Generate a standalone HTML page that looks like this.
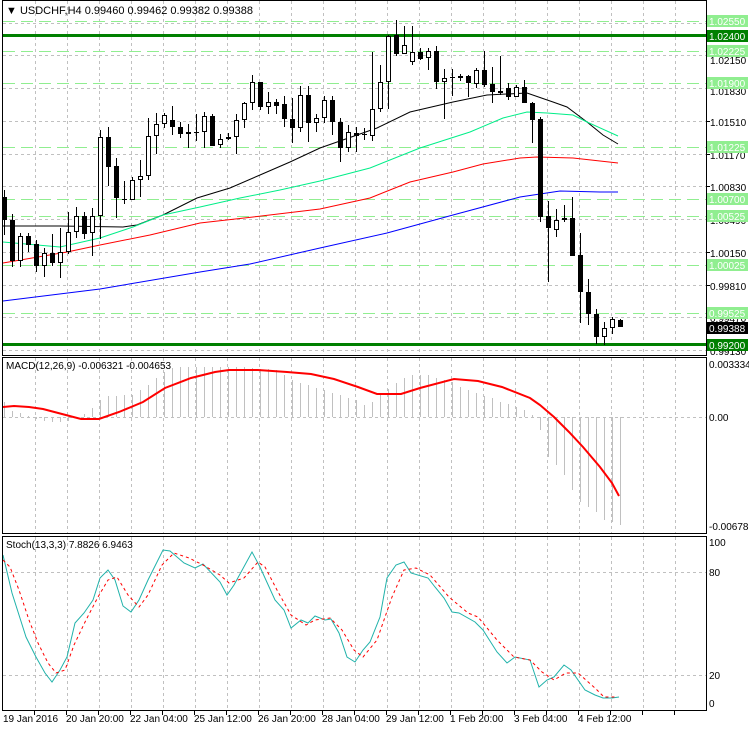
<!DOCTYPE html>
<html><head><meta charset="utf-8"><style>
html,body{margin:0;padding:0;background:#fff;}
body{width:749px;height:731px;overflow:hidden;font-family:"Liberation Sans",sans-serif;}
svg{display:block}
text{font-family:"Liberation Sans",sans-serif;font-size:10px;fill:#000}
</style></head><body>
<svg id="s" width="749" height="731" xmlns="http://www.w3.org/2000/svg" shape-rendering="crispEdges">
<rect width="749" height="731" fill="#fff"/>
<g id="grid" stroke="#c0c0c0" stroke-dasharray="3,3" stroke-width="1"></g>
<g id="lv"></g>
<g id="ma" fill="none" shape-rendering="auto"></g>
<g id="cd"></g>
<g id="hist" stroke="#c0c0c0"></g>
<g id="ind" fill="none" shape-rendering="auto"></g>
<g stroke="#000" fill="none">
<rect x="2.5" y="0.5" width="704" height="355"/>
<rect x="2.5" y="357.5" width="704" height="176"/>
<rect x="2.5" y="536.5" width="704" height="174"/>
</g>
<g id="ticks" stroke="#000"></g>
<text x="6" y="14" style="font-size:11px">&#9660; USDCHF,H4  0.99460 0.99462 0.99382 0.99388</text>
<text x="6" y="369" style="font-size:10px">MACD(12,26,9) -0.006321 -0.004653</text>
<text x="6" y="548" style="font-size:10px">Stoch(13,3,3) 7.8826 6.9463</text>
<g id="ax">
<text x="710" y="64">1.02150</text>
<text x="710" y="95">1.01830</text>
<text x="710" y="126">1.01510</text>
<text x="710" y="159">1.01170</text>
<text x="710" y="191">1.00830</text>
<text x="710" y="224">1.00490</text>
<text x="710" y="257">1.00150</text>
<text x="710" y="290">0.99810</text>
<text x="710" y="322">0.99470</text>
<text x="710" y="355">0.99130</text>
</g>
<g id="bx"></g>
<text x="709" y="368">0.003334</text>
<text x="709" y="421">0.00</text>
<text x="709" y="530">-0.006781</text>
<text x="709" y="546">100</text>
<text x="709" y="576">80</text>
<text x="709" y="679">20</text>
<text x="709" y="707">0</text>
<text x="3" y="722">19 Jan 2016</text>
<text x="66" y="722">20 Jan 20:00</text>
<text x="130" y="722">22 Jan 04:00</text>
<text x="194" y="722">25 Jan 12:00</text>
<text x="258" y="722">26 Jan 20:00</text>
<text x="322" y="722">28 Jan 04:00</text>
<text x="386" y="722">29 Jan 12:00</text>
<text x="450" y="722">1 Feb 20:00</text>
<text x="514" y="722">3 Feb 04:00</text>
<text x="578" y="722">4 Feb 12:00</text>
</svg>
<script>
var NS="http://www.w3.org/2000/svg";
function el(p,t,a){var e=document.createElementNS(NS,t);for(var k in a)e.setAttribute(k,a[k]);document.getElementById(p).appendChild(e);return e;}
for(var k=1;k<=21;k++){var x=3.5+32*k;if(x>705)break;
 el('grid','line',{x1:x,y1:1,x2:x,y2:355});el('grid','line',{x1:x,y1:358,x2:x,y2:533});el('grid','line',{x1:x,y1:537,x2:x,y2:710});
 el('ticks','line',{x1:x-1,y1:711,x2:x-1,y2:715});}
for(var k=0;k<=10;k++){var y=Math.round(22.5+32.75*k)+0.5;el('grid','line',{x1:3,y1:y,x2:706,y2:y});el('ticks','line',{x1:706,y1:y,x2:710,y2:y});}
[417.5].forEach(function(y){el('grid','line',{x1:3,y1:y,x2:706,y2:y});});
[572.5,675.5].forEach(function(y){el('grid','line',{x1:3,y1:y,x2:706,y2:y});});
[21,51,83,147,199,216,265,313].forEach(function(y){el('lv','line',{x1:3,y1:y+0.5,x2:706,y2:y+0.5,stroke:'#90ee90','stroke-dasharray':'12,6'});});
[35,344].forEach(function(y){el('lv','rect',{x:3,y:y-1,width:703,height:3,fill:'#008000'});});
function box(y,t,bg){el('bx','rect',{x:707,y:y-6,width:41,height:12,fill:bg});var e=el('bx','text',{x:709,y:y+4,style:'fill:#fff'});e.textContent=t;}
box(21,'1.02550','#90ee90');box(36,'1.02400','#008000');box(51,'1.02225','#90ee90');box(83,'1.01900','#90ee90');
box(147,'1.01225','#90ee90');box(199,'1.00700','#90ee90');box(216,'1.00525','#90ee90');box(265,'1.00025','#90ee90');
box(313,'0.99525','#90ee90');box(328,'0.99388','#000');box(345,'0.99200','#008000');
function pl(g,pts,col,extra){var a={points:pts.map(function(p){return p.join(',')}).join(' '),stroke:col,'stroke-width':1};for(var k in extra)a[k]=extra[k];el(g,'polyline',a);}
pl('ma',[[3,226],[60,226],[123,227],[137,225],[163,215],[197,198],[230,188],[260,175],[290,162],[320,148],[377,128],[410,112],[453,102],[487,95],[527,93],[553,102],[567,107],[587,122],[603,135],[618,144]],'#000');
pl('ma',[[3,242],[60,247],[100,238],[133,227],[163,215],[200,207],[240,198],[280,190],[320,181],[370,168],[420,148],[470,132],[503,118],[527,112],[547,113],[573,115],[587,122],[618,136]],'#00ee88');
pl('ma',[[3,263],[67,252],[100,245],[150,235],[200,223],[253,217],[320,209],[370,198],[410,182],[453,172],[483,164],[520,158],[537,157],[573,158],[618,163]],'#ff0000');
pl('ma',[[3,301],[100,289],[200,272],[250,264],[320,248],[387,233],[453,215],[520,197],[560,191],[600,192],[618,192]],'#0000ff');
var C=[[0,197,220,190,235],[0,220,261,214,267],[1,236,261,233,267],[0,236,245,233,252],[0,244,266,240,272],[1,253,266,248,277],[0,253,263,234,266],[1,252,263,228,278],[1,232,252,212,254],[1,216,232,207,238],
[0,216,234,212,239],[1,216,233,208,256],[1,137,216,130,239],[0,137,167,127,186],[0,166,198,158,218],[0,199,200,181,204],[1,180,200,177,200],[1,176,180,160,197],[1,136,176,118,180],[1,124,136,113,154],
[1,115,124,113,128],[0,120,127,106,135],[0,127,134,122,138],[1,132,134,124,148],[0,132,133,114,141],[1,116,132,112,148],[0,116,146,114,146],[1,139,145,134,148],[1,137,139,133,140],[1,120,137,114,154],
[1,103,120,102,128],[1,82,103,75,110],[0,82,107,82,110],[1,102,107,92,114],[0,102,106,99,114],[0,104,119,96,127],[0,119,128,98,143],[1,95,128,86,132],[0,95,123,86,142],[1,118,123,114,132],
[1,100,118,96,123],[0,100,122,96,135],[0,122,148,118,162],[1,132,148,125,152],[0,133,136,127,152],[0,134,135,128,140],[1,109,136,52,141],[1,82,109,65,112],[1,36,82,35,109],[0,35,54,20,56],
[1,45,54,26,54],[1,52,62,26,65],[0,52,59,48,60],[1,51,58,48,70],[0,51,82,46,89],[1,78,82,69,119],[0,77,78,69,96],[0,76,78,74,81],[0,76,83,75,97],[1,70,84,68,88],
[0,70,85,51,87],[0,84,92,67,103],[0,91,93,56,95],[0,88,97,83,100],[1,87,97,85,97],[0,87,103,80,103],[0,103,120,102,143],[0,119,217,117,222],[0,216,228,201,282],[1,220,230,209,237],
[1,218,220,205,222],[0,218,256,197,256],[0,255,292,233,323],[0,292,314,279,325],[0,314,337,309,344],[1,328,337,322,345],[1,319,328,317,334],[0,320,327,319,327]];
C.forEach(function(c,i){var cx=Math.round(3.7+8*i)+0.5;
 el('cd','line',{x1:cx,y1:c[3],x2:cx,y2:c[4],stroke:'#000'});
 var h=Math.max(c[2]-c[1],1);
 if(c[0]) el('cd','rect',{x:cx-2,y:c[1]+0.5,width:4,height:Math.max(h-1,1),fill:'#fff',stroke:'#000'});
 else el('cd','rect',{x:cx-2.5,y:c[1],width:5,height:h,fill:'#000'});
});
var A=[[0,402],[1,411],[2,413],[3,416],[4,419],[5,421],[6,422],[7,422],[8,421],[9,418],[10,414],[11,408],[12,400],[13,396],[16,395],[17,390],[18,385],[19,378],[20,372],[21,368],[22,367],[30,367],[34,370],[35,375],[36,380],[38,385],[40,390],[42,395],[44,400],[45,405],[46,402],[47,395],[49,383],[50,378],[51,375],[53,375],[54,378],[56,382],[57,387],[58,390],[59,393],[61,398],[62,402],[63,404],[64,407],[65,410],[66,415],[67,430],[68,457],[69,465],[70,475],[71,490],[72,502],[74,512],[75,520],[76,522],[77,525]];
function interp(i){for(var k=0;k<A.length-1;k++){if(i>=A[k][0]&&i<=A[k+1][0]){var t=(i-A[k][0])/(A[k+1][0]-A[k][0]);return A[k][1]+t*(A[k+1][1]-A[k][1]);}}return 417;}
for(var i=0;i<78;i++){var cx=Math.round(3.7+8*i)+0.5;el('hist','line',{x1:cx,y1:417,x2:cx,y2:Math.round(interp(i))});}
pl('ind',[[3,407],[14,406],[29,407],[43,409],[62,414],[81,419],[99,419],[119,412],[143,402],[165,388],[191,378],[215,372],[229,370],[258,370],[287,372],[311,374],[334,379],[358,387],[377,394],[401,394],[420,388],[454,379],[478,381],[502,387],[530,398],[540,405],[554,417],[569,432],[583,447],[600,467],[612,483],[619,496]],'#ff0000',{'stroke-width':2});
pl('ind',[[3,555],[12,593],[26,637],[36,657],[45,673],[52,682],[60,670],[67,657],[75,623],[84,613],[93,600],[100,578],[108,570],[115,580],[123,606],[131,612],[139,600],[148,580],[163,550],[170,551],[184,563],[195,568],[203,564],[220,582],[227,595],[234,585],[252,552],[260,567],[275,600],[284,610],[291,628],[301,620],[308,623],[315,616],[325,620],[331,619],[339,633],[347,657],[355,662],[363,650],[370,642],[380,617],[387,578],[396,565],[404,562],[411,573],[428,578],[435,587],[444,598],[452,612],[459,613],[475,622],[483,630],[497,652],[507,663],[515,657],[530,660],[539,687],[547,680],[554,677],[564,665],[571,670],[585,690],[595,695],[603,698],[612,698],[619,697]],'#20b2aa');
pl('ind',[[3,560],[10,567],[19,590],[29,620],[38,643],[48,663],[56,673],[65,670],[74,645],[86,620],[98,597],[108,580],[117,577],[128,595],[139,607],[148,595],[162,565],[174,553],[189,558],[203,565],[220,575],[229,583],[244,578],[258,562],[265,567],[277,590],[291,615],[306,625],[315,620],[330,618],[342,630],[354,650],[363,657],[377,640],[392,597],[404,570],[416,568],[430,575],[449,597],[468,613],[478,617],[497,640],[514,657],[530,660],[542,672],[554,680],[566,673],[578,673],[595,688],[604,697],[616,697]],'#ff0000',{'stroke-dasharray':'3,3'});
</script>
</body></html>
